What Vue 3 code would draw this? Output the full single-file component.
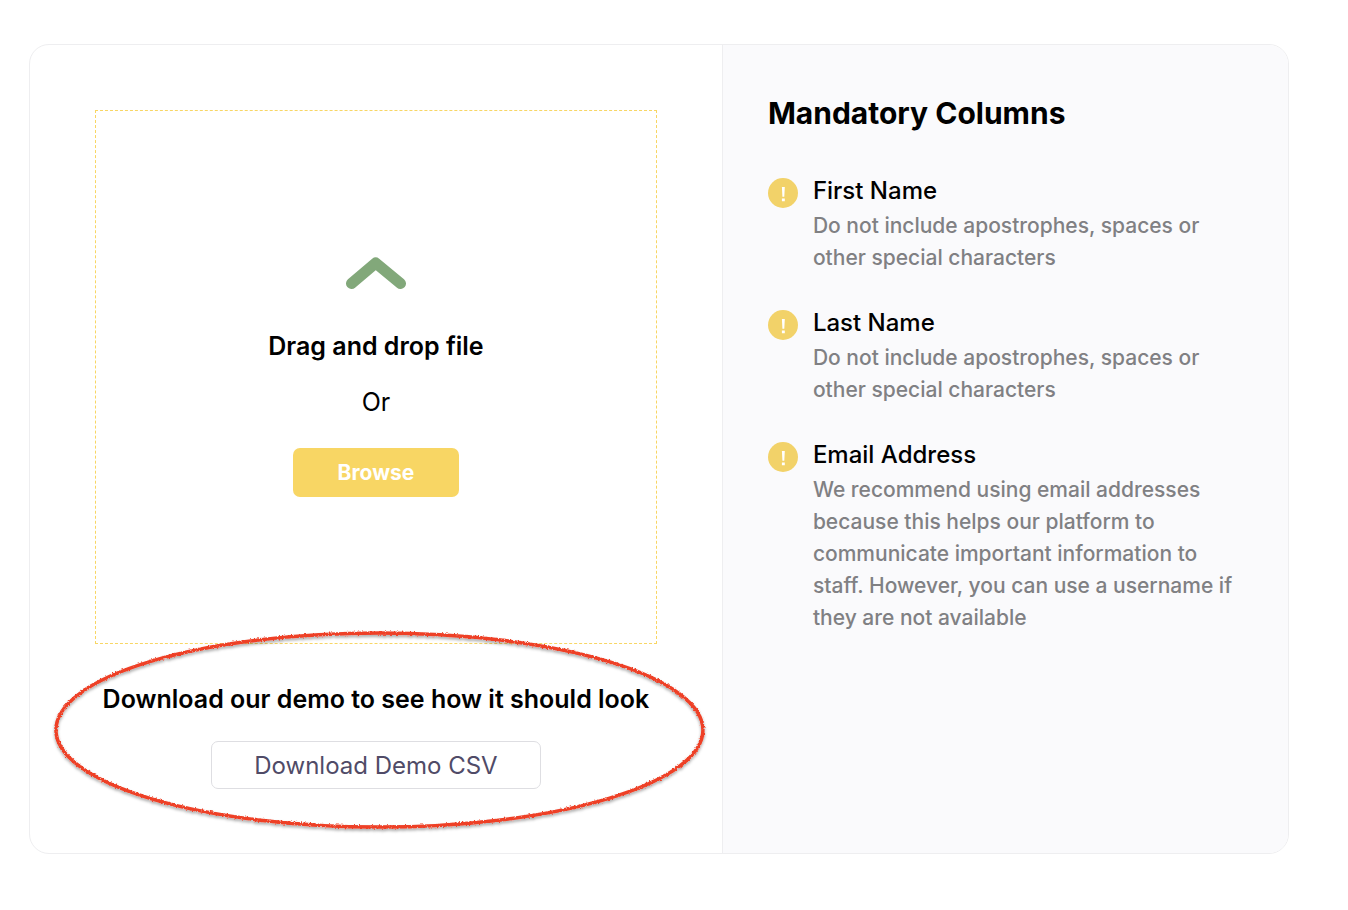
<script setup>
import { ref } from 'vue'

const fileInput = ref(null)
const columns = [
  { name: 'First Name', note: 'Do not include apostrophes, spaces or other special characters' },
  { name: 'Last Name', note: 'Do not include apostrophes, spaces or other special characters' },
  {
    name: 'Email Address',
    note: 'We recommend using email addresses because this helps our platform to communicate important information to staff. However, you can use a username if they are not available',
  },
]
</script>

<template>
  <main class="card">
    <section class="upload">
      <div class="dropzone">
        <svg class="chevron" viewBox="0 0 60 32" aria-hidden="true">
          <path d="M5.500 26.500 L29.700 6 L54.500 26.500" />
        </svg>
        <p class="strong">Drag and drop file</p>
        <p class="or">Or</p>
        <button class="browse" type="button" @click="fileInput.click()">Browse</button>
        <input ref="fileInput" type="file" accept=".csv" aria-label="CSV file" hidden />
      </div>
      <div class="demo">
        <p class="strong">Download our demo to see how it should look</p>
        <button class="download" type="button">Download Demo CSV</button>
        <svg class="ring" aria-hidden="true">
          <defs>
            <filter id="crayon" x="-5%" y="-10%" width="110%" height="120%">
              <feTurbulence type="fractalNoise" baseFrequency="0.6" numOctaves="2" seed="4" result="noise" />
              <feDisplacementMap in="SourceGraphic" in2="noise" scale="3" xChannelSelector="R" yChannelSelector="G" result="rough" />
              <feDropShadow in="rough" dx="0" dy="2" stdDeviation="1.500" flood-color="#000" flood-opacity="0.35" />
            </filter>
          </defs>
          <ellipse cx="50%" cy="50%" rx="49.700%" ry="48.500%" filter="url(#crayon)" />
        </svg>
      </div>
    </section>
    <section class="mandatory">
      <h1>Mandatory Columns</h1>
      <ul>
        <li v-for="column in columns" :key="column.name">
          <svg class="alert" viewBox="0 0 30 30" aria-hidden="true">
            <circle cx="15" cy="15" r="15" />
            <path d="M13.900 9h2.900l-.5 9.800h-1.900z M13.900 20.600h2.900v2.600h-2.900z" />
          </svg>
          <div class="text">
            <h2>{{ column.name }}</h2>
            <p>{{ column.note }}</p>
          </div>
        </li>
      </ul>
    </section>
  </main>
</template>

<style>
body {
  margin: 0;
  background: #fff;
}
</style>

<style scoped>
.card {
  display: grid;
  grid-template-columns: 11fr 9fr;
  margin: 44px 59px 56px 29px;
  border: 1px solid #eeeef0;
  border-radius: 20px;
  overflow: hidden;
  font-family: Inter, "Open Sans", sans-serif;
  color: #000;
}
h1,
h2,
p,
ul {
  margin: 0;
  padding: 0;
}
.upload {
  padding: 65px 65px 64px;
}
.dropzone {
  display: flex;
  flex-direction: column;
  align-items: center;
  justify-content: center;
  box-sizing: border-box;
  min-height: 534px;
  border: 1px dashed #f8d664;
}
.chevron {
  width: 60px;
  height: 32px;
  margin-bottom: 39px;
}
.chevron path {
  fill: none;
  stroke: #82a87a;
  stroke-width: 11;
  stroke-linecap: round;
  stroke-linejoin: round;
}
.strong {
  font-size: 25px;
  line-height: 36px;
  font-weight: 600;
  white-space: nowrap;
}
.or {
  margin: 20px 0 28px;
  font-size: 25px;
  line-height: 36px;
}
button {
  box-sizing: border-box;
  padding: 0;
  border-radius: 7px;
  font-family: inherit;
  cursor: pointer;
}
.browse {
  width: 166px;
  height: 49px;
  border: 0;
  background: #f8d664;
  color: #fff;
  font-size: 21px;
  font-weight: 700;
}
.demo {
  position: relative;
  display: flex;
  flex-direction: column;
  align-items: center;
  gap: 24px;
  padding-top: 37px;
}
.download {
  width: 330px;
  height: 48px;
  border: 1px solid #dedee2;
  background: #fff;
  color: #504b67;
  font-size: 24px;
}
.ring {
  position: absolute;
  top: -14px;
  left: -41px;
  width: calc(100% + 89px);
  height: 200px;
  overflow: visible;
  pointer-events: none;
}
.ring ellipse {
  fill: none;
  stroke: #ee4027;
  stroke-width: 3.5;
}
.mandatory {
  padding: 45px;
  border-left: 1px solid #eeeef0;
  background: #fafafc;
}
h1 {
  margin-bottom: 36px;
  font-size: 30px;
  line-height: 46px;
  font-weight: 700;
}
ul {
  display: grid;
  gap: 30px;
  list-style: none;
}
li {
  display: flex;
  gap: 15px;
}
.alert {
  flex: none;
  width: 30px;
  height: 30px;
  margin-top: 6px;
}
.alert circle {
  fill: #f2d269;
}
.alert path {
  fill: #fff;
}
h2 {
  font-size: 24px;
  line-height: 38px;
  font-weight: 500;
}
.text p {
  color: #808083;
  font-size: 21px;
  font-weight: 500;
  line-height: 32px;
}
</style>
